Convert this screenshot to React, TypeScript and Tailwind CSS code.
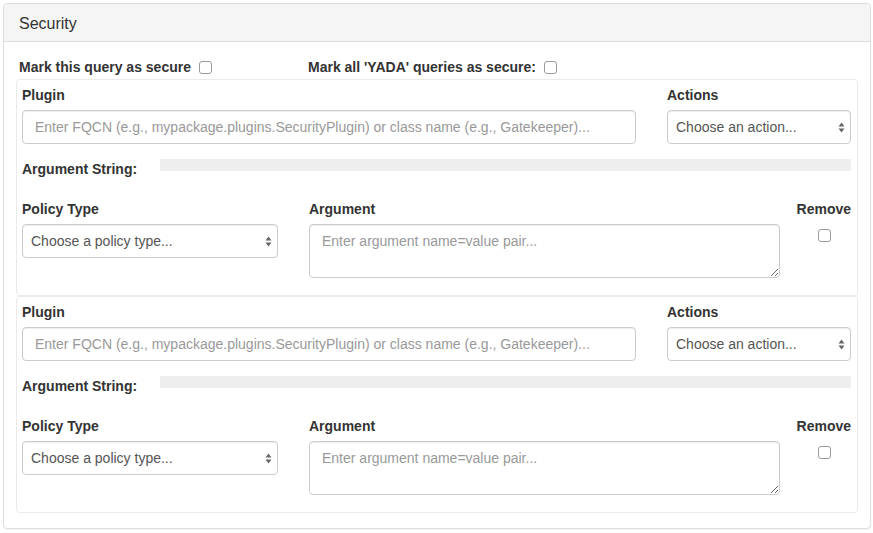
import React from "react";

const font = { fontFamily: '"Liberation Sans", Arial, sans-serif' };

function SelectBox({ text, width }: { text: string; width: string }) {
  return (
    <div className={`relative ${width} h-[34px]`}>
      <select
        className="w-full h-full appearance-none bg-white border border-[#ccc] rounded-[4px] pl-[8px] pr-6 text-[14px] text-[#555] outline-none shadow-[inset_0_1px_1px_rgba(0,0,0,0.075)]"
        defaultValue=""
      >
        <option value="">{text}</option>
      </select>
      <svg
        className="absolute right-[6px] top-[12px] pointer-events-none"
        width="7"
        height="11"
        viewBox="0 0 7 11"
      >
        <path d="M3.5 0.5 L6.5 4.5 L0.5 4.5 Z" fill="#666" />
        <path d="M3.5 10.5 L6.5 6.5 L0.5 6.5 Z" fill="#666" />
      </svg>
    </div>
  );
}

function Check() {
  return (
    <input
      type="checkbox"
      className="appearance-none w-[13px] h-[13px] border border-[#9a9a9a] rounded-[3px] bg-white align-middle"
    />
  );
}

function PluginBox() {
  return (
    <div className="border border-[#eaeaea] rounded-[4px] pt-[5px] pb-[17px] pl-[5px] pr-[6px]">
      <div className="flex gap-[31px]">
        <div className="w-[614px]">
          <label className="block font-bold text-[14px] leading-[20px] mb-[5px]">Plugin</label>
          <input
            type="text"
            placeholder="Enter FQCN (e.g., mypackage.plugins.SecurityPlugin) or class name (e.g., Gatekeeper)..."
            className="w-full h-[34px] border border-[#ccc] rounded-[4px] px-[12px] text-[14px] placeholder:text-[#999] outline-none shadow-[inset_0_1px_1px_rgba(0,0,0,0.075)]"
          />
        </div>
        <div className="w-[184px]">
          <label className="block font-bold text-[14px] leading-[20px] mb-[5px]">Actions</label>
          <SelectBox text="Choose an action..." width="w-[184px]" />
        </div>
      </div>
      <div className="flex mt-[15px] h-[20px]">
        <label className="w-[138px] font-bold text-[14px] leading-[20px]">Argument String:</label>
        <div className="flex-1 h-[12px] bg-[#eeeeee]" />
      </div>
      <div className="flex mt-[20px]">
        <div className="w-[256px]">
          <label className="block font-bold text-[14px] leading-[20px] mb-[5px]">Policy Type</label>
          <SelectBox text="Choose a policy type..." width="w-[256px]" />
        </div>
        <div className="w-[471px] ml-[31px]">
          <label className="block font-bold text-[14px] leading-[20px] mb-[5px]">Argument</label>
          <textarea
            placeholder="Enter argument name=value pair..."
            className="block w-full h-[54px] border border-[#ccc] rounded-[4px] px-[12px] py-[6px] text-[14px] leading-[20px] placeholder:text-[#999] outline-none shadow-[inset_0_1px_1px_rgba(0,0,0,0.075)]"
          />
        </div>
        <div className="w-[54px] ml-[17px] flex flex-col items-center">
          <label className="block font-bold text-[14px] leading-[20px] self-end">Remove</label>
          <div className="mt-[10px] h-[13px] flex">
            <Check />
          </div>
        </div>
      </div>
    </div>
  );
}

export default function App() {
  return (
    <div className="bg-white min-h-[533px] pt-[3px] pl-[3px] text-[#333]" style={font}>
      <div className="w-[868px] border border-[#ddd] rounded-[4px] shadow-[0_1px_1px_rgba(0,0,0,0.05)]">
        <div className="bg-[#f5f5f5] border-b border-[#ddd] rounded-t-[4px] px-[15px] pt-[2px] h-[38px] flex items-center">
          <h3 className="text-[16px] leading-[18px]">Security</h3>
        </div>
        <div className="pt-[15px] pb-[15px] pl-[12px] pr-[12px]">
          <div className="flex h-[20px] ml-[3px] items-center font-bold text-[14px]">
            <div className="w-[289px] flex items-center">
              <span>Mark this query as secure</span>
              <span className="ml-[8px] flex">
                <Check />
              </span>
            </div>
            <div className="flex items-center">
              <span>Mark all 'YADA' queries as secure:</span>
              <span className="ml-[8px] flex">
                <Check />
              </span>
            </div>
          </div>
          <div className="mt-[2px]">
            <PluginBox />
            <PluginBox />
          </div>
        </div>
      </div>
    </div>
  );
}
